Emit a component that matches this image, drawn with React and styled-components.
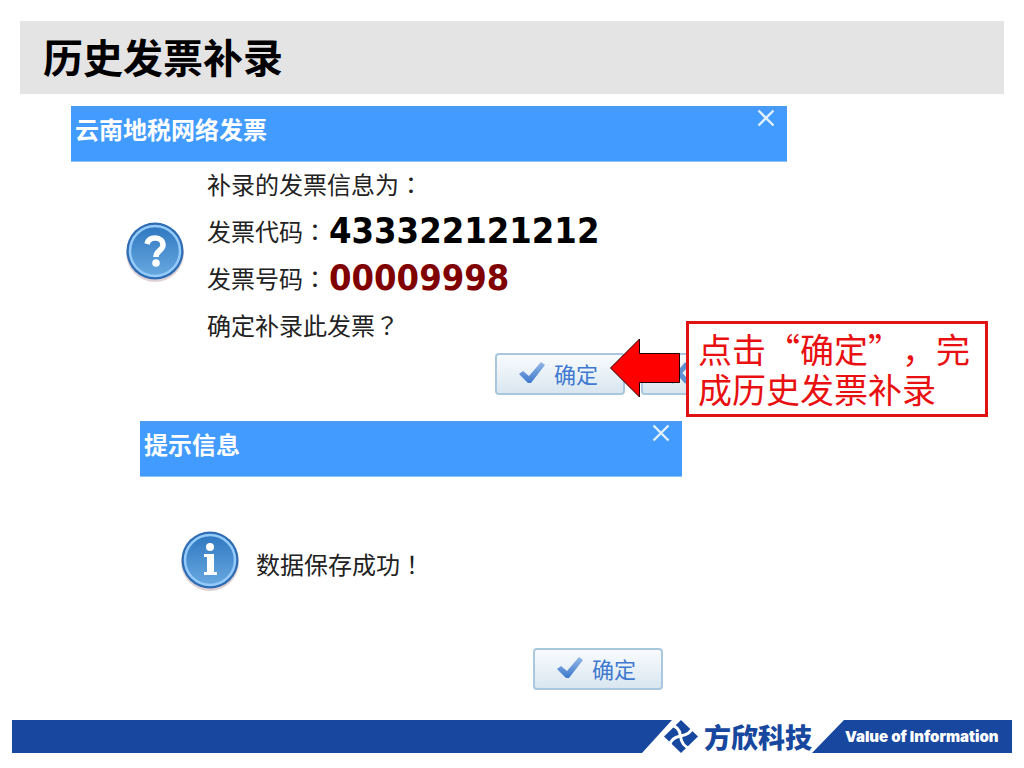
import React from 'react';
import styled, { createGlobalStyle } from 'styled-components';

const GlobalStyle = createGlobalStyle`
  * {
    box-sizing: border-box;
  }
  body {
    margin: 0;
    background: #fff;
    font-family: 'Noto Sans CJK SC', sans-serif;
    text-spacing-trim: space-all;
  }
`;

const Slide = styled.div`
  display: flex;
  flex-direction: column;
  min-height: 100vh;
  padding: 21px 12px 15px;
`;

const TitleBar = styled.header`
  display: flex;
  align-items: center;
  height: 73px;
  margin: 0 8px 12px;
  padding: 0 23px 4px;
  background: #e4e4e4;

  h1 {
    margin: 0;
    font-size: 40px;
    line-height: 48px;
    font-weight: 700;
    color: #000;
  }
`;

const Stage = styled.main`
  position: relative;
  display: flex;
  flex-direction: column;
  flex: 1;
  gap: 26px;
`;

const Dialog = styled.section`
  display: flex;
  flex-direction: column;
  margin-left: ${(props) => props.$left}px;
  margin-right: ${(props) => props.$right}px;
`;

const DialogHead = styled.div`
  display: flex;
  justify-content: space-between;
  align-items: flex-start;
  height: 56px;
  padding: 0 12px 0 4px;
  background: linear-gradient(#4a9af2, #429bff 8px);
  border-bottom: 1px solid #8fc2fb;

  h2 {
    margin: 5px 0 0;
    font-size: 24px;
    line-height: 36px;
    font-weight: 700;
    color: #fff;
  }
`;

const CloseButton = styled.button`
  display: flex;
  padding: 3px 0;
  border: 0;
  background: none;
  color: #e3f1ff;
`;

const DialogBody = styled.div`
  display: flex;
  align-items: center;
  gap: ${(props) => props.$gap}px;
  padding: ${(props) => props.$padding};
  font-family: 'Noto Sans CJK TC', sans-serif;
  font-size: 24px;
  line-height: 43px;
  color: #222;

  svg {
    flex: none;
    margin-bottom: 8px;
  }
  p {
    margin: 0;
    display: flex;
    align-items: center;
    height: 47px;
    padding-bottom: 4px;
  }
`;

const Digits = styled.strong`
  margin-left: 2px;
  font-family: 'DejaVu Sans Condensed', 'DejaVu Sans', sans-serif;
  font-size: 36px;
  font-weight: 700;
  color: ${(props) => props.$color};
`;

const Actions = styled.div`
  display: flex;
  justify-content: flex-end;
  gap: 16px;
  padding: 3px ${(props) => props.$right}px 0;
`;

const ActionButton = styled.button`
  display: flex;
  align-items: center;
  justify-content: ${(props) => (props.$start ? 'flex-start' : 'center')};
  gap: 8px;
  width: 130px;
  height: 42px;
  padding: 0 4px 3px ${(props) => (props.$start ? 24 : 0)}px;
  border: 2px solid #a9c8de;
  border-radius: 4px;
  background: linear-gradient(#f8fbfe, #e9f1f7 50%, #d9e6f0);
  font-family: inherit;
  font-size: 22px;
  line-height: 32px;
  color: #4079d0;
`;

const Callout = styled.p`
  position: absolute;
  top: 215px;
  right: 24px;
  width: 302px;
  margin: 0;
  padding: 5px 9px;
  border: 3px solid #e01212;
  background: #fff;
  font-size: 34px;
  line-height: 40px;
  color: #e81010;
`;

const Arrow = styled.svg`
  position: absolute;
  top: 232px;
  right: 332px;
`;

const Footer = styled.footer`
  display: flex;
  height: 33px;
`;

const FooterBar = styled.div`
  flex: 1;
  margin-right: -8px;
  background: #17479e;
  clip-path: polygon(0 0, 100% 0, calc(100% - 30px) 100%, 0 100%);
`;

const Brand = styled.div`
  display: flex;
  align-items: center;
  gap: 6px;
  font-size: 27px;
  line-height: 33px;
  font-weight: 900;
  color: #17479e;
`;

const Slogan = styled.div`
  width: 200px;
  padding: 0 12px 0 33px;
  background: #17479e;
  clip-path: polygon(32px 0, 100% 0, 100% 100%, 0 100%);
  font-family: Inter, sans-serif;
  font-size: 15px;
  line-height: 34px;
  font-weight: 900;
  white-space: nowrap;
  color: #fff;
`;

function CloseIcon() {
  return (
    <svg width="18" height="18" viewBox="0 0 18 18" aria-hidden="true">
      <path d="M1.5 1.5l15 15M16.5 1.5l-15 15" stroke="currentColor" strokeWidth="2.4" />
    </svg>
  );
}

function CheckIcon() {
  return (
    <svg width="28" height="24" viewBox="0 0 28 24" aria-hidden="true">
      <defs>
        <linearGradient id="check" x1="0" y1="0" x2="0" y2="1">
          <stop offset="0" stopColor="#94b8e6" />
          <stop offset="1" stopColor="#3d78cc" />
        </linearGradient>
      </defs>
      <path d="M1 13l4-3 6 5L23 1l4 3-14 18h-3z" fill="url(#check)" />
    </svg>
  );
}

function CrossIcon() {
  return (
    <svg width="24" height="24" viewBox="0 0 24 24" aria-hidden="true">
      <path d="M4 3l16 18M20 3L4 21" stroke="#5f90d2" strokeWidth="5" />
    </svg>
  );
}

function RoundIcon({ children }) {
  return (
    <svg width="60" height="62" viewBox="0 0 60 62" aria-hidden="true">
      <defs>
        <linearGradient id="disc" x1="0" y1="0" x2="0" y2="1">
          <stop offset="0" stopColor="#2f78c0" />
          <stop offset="1" stopColor="#68a8e0" />
        </linearGradient>
      </defs>
      <circle cx="30" cy="32" r="29" fill="#cbb3b8" opacity="0.6" />
      <circle cx="30" cy="30" r="28.5" fill="#2e6db4" />
      <circle cx="30" cy="30" r="25" fill="url(#disc)" stroke="#94cbfa" strokeWidth="2.5" />
      {children}
    </svg>
  );
}

function QuestionIcon() {
  return (
    <RoundIcon>
      <path d="M22 23c1-4 4-6 8-6 5 0 8 3 8 7 0 6-7 5-7 12" fill="none" stroke="#fff" strokeWidth="5.5" />
      <circle cx="31" cy="42" r="3.8" fill="#fff" />
    </RoundIcon>
  );
}

function InfoIcon() {
  return (
    <RoundIcon>
      <circle cx="30" cy="17" r="4" fill="#fff" />
      <path d="M24 24h10v18h3v3H24v-3h3V27h-3z" fill="#fff" />
    </RoundIcon>
  );
}

function Logo() {
  return (
    <svg width="34" height="33" viewBox="0 0 34 33" aria-hidden="true">
      <path d="M17 0l17 16.500L17 33 0 16.500z" fill="#17479e" />
      <g fill="none" stroke="#fff" strokeWidth="3">
        <path d="M6 5c7 1 10 5 10.500 11S20 27 27 29" />
        <path d="M29 7c-2 6-6 8-12.500 9S6 20 5 27" />
      </g>
    </svg>
  );
}

export default function App() {
  return (
    <>
      <GlobalStyle />
      <Slide>
        <TitleBar>
          <h1>历史发票补录</h1>
        </TitleBar>
        <Stage>
          <Dialog $left={59} $right={225}>
            <DialogHead>
              <h2>云南地税网络发票</h2>
              <CloseButton aria-label="关闭">
                <CloseIcon />
              </CloseButton>
            </DialogHead>
            <DialogBody $gap={22} $padding="0 54px">
              <QuestionIcon />
              <div>
                <p>补录的发票信息为：</p>
                <p>
                  发票代码：<Digits $color="#000">433322121212</Digits>
                </p>
                <p>
                  发票号码：<Digits $color="#800000">00009998</Digits>
                </p>
                <p>确定补录此发票？</p>
              </div>
            </DialogBody>
            <Actions $right={16}>
              <ActionButton>
                <CheckIcon />
                确定
              </ActionButton>
              <ActionButton $start aria-label="取消">
                <CrossIcon />
              </ActionButton>
            </Actions>
          </Dialog>
          <Dialog $left={128} $right={330}>
            <DialogHead>
              <h2>提示信息</h2>
              <CloseButton aria-label="关闭">
                <CloseIcon />
              </CloseButton>
            </DialogHead>
            <DialogBody $gap={16} $padding="53px 40px 45px">
              <InfoIcon />
              <p>数据保存成功！</p>
            </DialogBody>
            <Actions $right={19}>
              <ActionButton>
                <CheckIcon />
                确定
              </ActionButton>
            </Actions>
          </Dialog>
          <Arrow width="70" height="60" viewBox="0 0 70 60" aria-hidden="true">
            <path d="M0.500 30L29.500 1v14.500H69.500v29H29.500V59z" fill="#f00" stroke="#200" />
          </Arrow>
          <Callout>点击“确定”，完成历史发票补录</Callout>
        </Stage>
        <Footer>
          <FooterBar />
          <Brand>
            <Logo />
            方欣科技
          </Brand>
          <Slogan>Value of Information</Slogan>
        </Footer>
      </Slide>
    </>
  );
}
